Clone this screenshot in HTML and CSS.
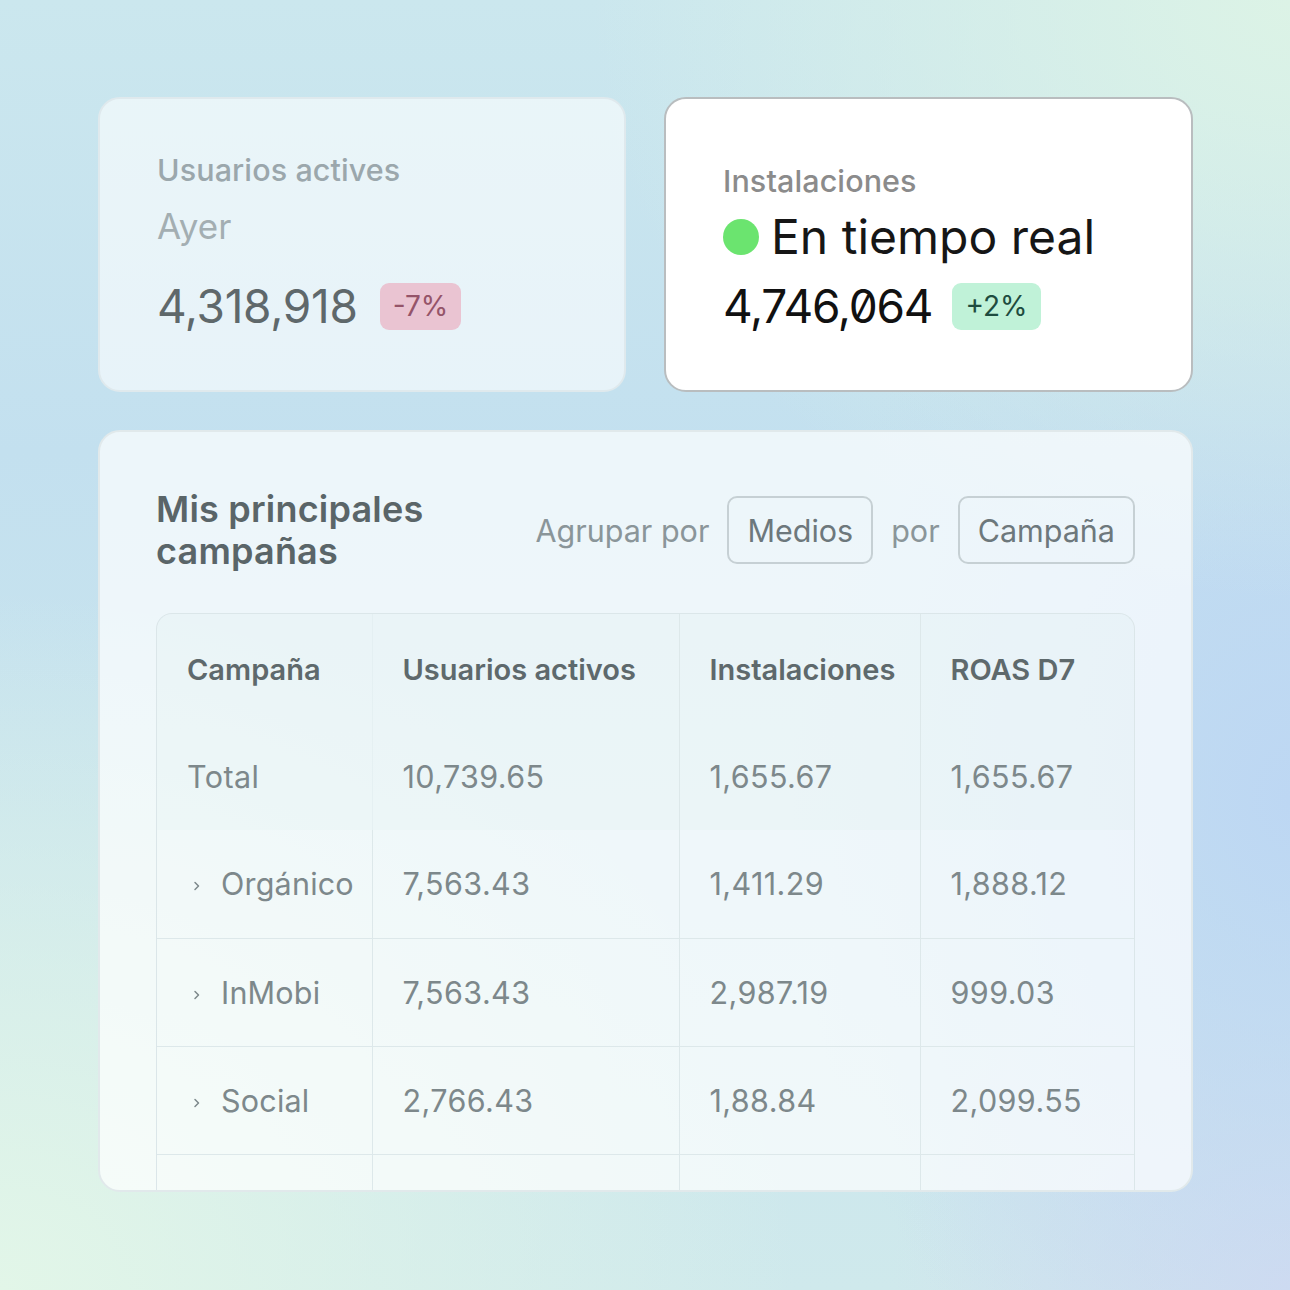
FILE: index.html
```html
<!DOCTYPE html>
<html lang="es">

<head>
  <meta charset="UTF-8">
  <meta name="viewport" content="width=device-width, initial-scale=1.0">
  <title>Mis principales campañas</title>
  <link rel="stylesheet" href="styles.css">
</head>

<body>

  <main class="page">
    <div class="stats">
      <section class="stat stat-soft">
        <p class="stat-label">Usuarios actives</p>
        <p class="stat-period">Ayer</p>
        <div class="stat-row">
          <span class="stat-value">4,318,918</span>
          <span class="badge badge-down">-7%</span>
        </div>
      </section>

      <section class="stat stat-live">
        <p class="stat-label">Instalaciones</p>
        <p class="stat-live-title"><span class="dot"></span>En tiempo real</p>
        <div class="stat-row">
          <span class="stat-value">4,746,064</span>
          <span class="badge badge-up">+2%</span>
        </div>
      </section>
    </div>

    <section class="campaigns">
      <div class="campaigns-head">
        <h2>Mis principales<br>campañas</h2>
        <div class="group-by">
          <span>Agrupar por</span>
          <button class="chip">Medios</button>
          <span>por</span>
          <button class="chip">Campaña</button>
        </div>
      </div>

      <div class="table-wrap">
        <table>
          <colgroup>
            <col style="width: 215px">
            <col style="width: 307px">
            <col style="width: 241px">
            <col style="width: 216px">
          </colgroup>
          <thead>
            <tr>
              <th>Campaña</th>
              <th>Usuarios activos</th>
              <th>Instalaciones</th>
              <th>ROAS D7</th>
            </tr>
          </thead>
          <tbody>
            <tr class="total">
              <td>Total</td>
              <td>10,739.65</td>
              <td>1,655.67</td>
              <td>1,655.67</td>
            </tr>
            <tr>
              <td class="name"><svg class="chev" viewBox="0 0 8 12"><path d="M2 2.5l3.5 3.5L2 9.5"/></svg>Orgánico</td>
              <td>7,563.43</td>
              <td>1,411.29</td>
              <td>1,888.12</td>
            </tr>
            <tr>
              <td class="name"><svg class="chev" viewBox="0 0 8 12"><path d="M2 2.5l3.5 3.5L2 9.5"/></svg>InMobi</td>
              <td>7,563.43</td>
              <td>2,987.19</td>
              <td>999.03</td>
            </tr>
            <tr>
              <td class="name"><svg class="chev" viewBox="0 0 8 12"><path d="M2 2.5l3.5 3.5L2 9.5"/></svg>Social</td>
              <td>2,766.43</td>
              <td>1,88.84</td>
              <td>2,099.55</td>
            </tr>
            <tr>
              <td></td>
              <td></td>
              <td></td>
              <td></td>
            </tr>
          </tbody>
        </table>
      </div>
    </section>
  </main>

</body>

</html>
```

FILE: styles.css
```css
* {
  box-sizing: border-box;
}

html,
body {
  margin: 0;
  padding: 0;
}

body {
  width: 1290px;
  height: 1290px;
  overflow: hidden;
  font-family: Inter, "Noto Sans", sans-serif;
  background:
    radial-gradient(ellipse 700px 600px at 100% 0%, #dcf3e6 0%, rgba(220, 243, 230, 0) 100%),
    radial-gradient(ellipse 800px 700px at 0% 100%, #e2f6e8 0%, rgba(226, 246, 232, 0) 100%),
    radial-gradient(ellipse 500px 700px at 100% 62%, #bdd7f3 0%, rgba(189, 215, 243, 0) 100%),
    radial-gradient(ellipse 400px 400px at 100% 100%, #d4dcf0 0%, rgba(212, 220, 240, 0) 100%),
    linear-gradient(180deg, #cbe7ee 0%, #c3e0ef 35%, #cfe9ec 100%);
}

p {
  margin: 0;
}

.page {
  padding: 97px 97px 0 98px;
  width: 1290px;
}

.stats {
  display: grid;
  grid-template-columns: 528px 529px;
  gap: 38px;
}

.stat {
  height: 295px;
  border-radius: 22px;
  padding: 0 57px;
  display: flex;
  flex-direction: column;
}

.stat-soft {
  background: rgba(255, 255, 255, 0.6);
  border: 2px solid #dfe9ed;
  padding-top: 53px;
}

.stat-live {
  background: #fff;
  border: 2px solid #b9bdbf;
  padding-top: 64px;
}

.stat-label {
  font-size: 30.5px;
  line-height: 36px;
  font-weight: 500;
  letter-spacing: 0.1px;
}

.stat-soft .stat-label {
  color: #9ba7ac;
}

.stat-live .stat-label {
  color: #8b8b8b;
}

.stat-period {
  margin-top: 17px;
  font-size: 35px;
  line-height: 42px;
  color: #a3aeb2;
}

.stat-live-title {
  margin-top: 10px;
  display: flex;
  align-items: center;
  gap: 12px;
  font-size: 48px;
  line-height: 56px;
  color: #161616;
}

.dot {
  width: 36px;
  height: 36px;
  border-radius: 50%;
  background: #6be46f;
}

.stat-row {
  display: flex;
  align-items: center;
  gap: 22px;
  margin-top: 36px;
}

.stat-live .stat-row {
  margin-top: 18px;
  gap: 20px;
}

.stat-value {
  font-size: 46px;
  line-height: 47px;
  letter-spacing: -0.3px;
  font-feature-settings: "zero" 1;
}

.stat-soft .stat-value {
  color: #5f686b;
}

.stat-live .stat-value {
  color: #111;
  letter-spacing: -1.2px;
}

.badge {
  height: 47px;
  padding: 0 13px;
  border-radius: 9px;
  font-size: 28px;
  line-height: 47px;
}

.badge-down {
  background: #eac4d2;
  color: #955469;
}

.badge-up {
  background: #c0f2d8;
  color: #1e4c3f;
}

.campaigns {
  margin-top: 38px;
  width: 1095px;
  height: 762px;
  border: 2px solid #e1e9eb;
  border-radius: 22px;
  background: rgba(255, 255, 255, 0.7);
  padding: 56px 56px 0 56px;
  overflow: hidden;
}

.campaigns-head {
  display: flex;
  justify-content: space-between;
  align-items: center;
  height: 84px;
}

.campaigns-head h2 {
  margin: 0;
  font-size: 36px;
  line-height: 42px;
  font-weight: 600;
  letter-spacing: 0.2px;
  color: #5a6568;
}

.group-by {
  display: flex;
  align-items: center;
  gap: 18px;
  font-size: 30.5px;
  color: #8a9599;
}

.chip {
  height: 68px;
  padding: 0 18px;
  border: 2px solid #c6d0d4;
  border-radius: 10px;
  background: transparent;
  font-family: inherit;
  font-size: 30.5px;
  color: #6d787c;
}

.table-wrap {
  margin-top: 41px;
  width: 979px;
  border: 1px solid #dbe6e9;
  border-bottom: none;
  border-radius: 16px 16px 0 0;
  overflow: hidden;
}

table {
  width: 100%;
  border-collapse: collapse;
  table-layout: fixed;
}

th,
td {
  height: 108px;
  padding: 0 0 0 30px;
  text-align: left;
  border-right: 1px solid #dde8ea;
  white-space: nowrap;
}

th:last-child,
td:last-child {
  border-right: none;
}

thead tr,
.total {
  background: rgba(214, 232, 238, 0.15);
}

th {
  font-size: 29px;
  font-weight: 600;
  color: #5e696c;
  padding-top: 2px;
}

th:first-child,
.total td:first-child {
  border-right-color: rgba(221, 232, 234, 0.4);
}

td {
  font-size: 30.5px;
  letter-spacing: 0.4px;
  color: #7d888b;
}

tbody tr {
  border-bottom: 1px solid #dde8ea;
}

tbody tr.total {
  border-bottom: none;
}

td.name {
  padding-left: 36px;
  letter-spacing: 0.2px;
}

.chev {
  width: 8px;
  height: 12px;
  margin-right: 20px;
  vertical-align: 3px;
  fill: none;
  stroke: #7d888b;
  stroke-width: 1.5;
  stroke-linecap: round;
  stroke-linejoin: round;
}
```
